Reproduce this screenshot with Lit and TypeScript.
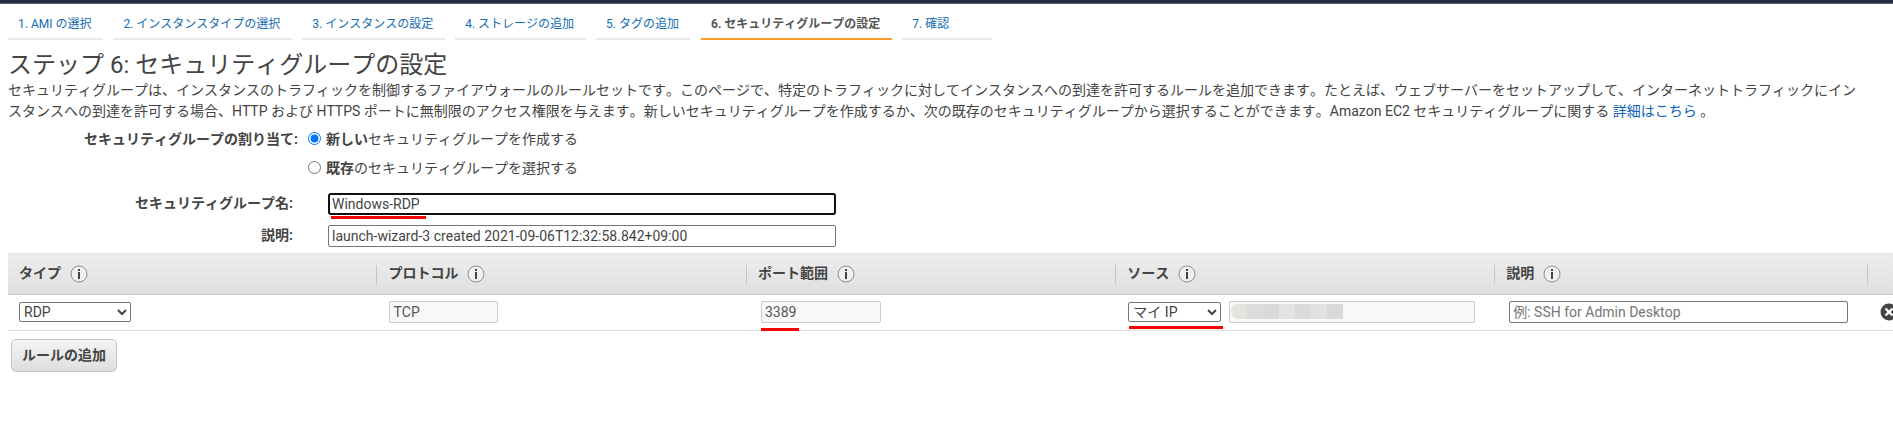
import { LitElement, html, css, svg } from "lit";
import { customElement, property, query } from "lit/decorators.js";

const STEPS = [
  "1. AMI の選択",
  "2. インスタンスタイプの選択",
  "3. インスタンスの設定",
  "4. ストレージの追加",
  "5. タグの追加",
  "6. セキュリティグループの設定",
  "7. 確認",
];
const CURRENT_STEP = 5;

const COLUMNS = ["タイプ", "プロトコル", "ポート範囲", "ソース", "説明"];

@customElement("info-icon")
export class InfoIcon extends LitElement {
  static styles = css`
    :host { display: inline-flex; }
    .icon { display: block; }
  `;
  render() {
    return html`<svg class="icon" width="18" height="18" viewBox="0 0 18 18" aria-hidden="true">
      <circle cx="9" cy="9" r="8" fill="#f0f0f0" stroke="#8c8c8c" stroke-width="1"></circle>
      <rect x="8" y="4" width="2" height="2" fill="#444"></rect>
      <rect x="8" y="7" width="2" height="7" fill="#444"></rect>
    </svg>`;
  }
}

@customElement("wizard-steps")
export class WizardSteps extends LitElement {
  @property({ type: Number }) current = 0;

  static styles = css`
    :host { display: block; }
    .steps {
      display: flex;
      gap: 10px;
      padding: 0 8px;
      font-size: 12px;
      line-height: 16px;
      white-space: nowrap;
    }
    .step {
      box-sizing: border-box;
      min-width: 90px;
      padding: 12px 12px 6px 10px;
      border-bottom: 2px solid #eaeaea;
      color: #146eb4;
      text-decoration: none;
    }
    .current {
      border-bottom-color: #ff9a29;
      color: #555;
      font-weight: bold;
    }
  `;
  render() {
    return html`<nav class="steps">
      ${STEPS.map(
        (s, i) => html`<a class="step ${i === this.current ? "current" : ""}" href="#step-${i + 1}">${s}</a>`
      )}
    </nav>`;
  }
}

@customElement("app-root")
export class AppRoot extends LitElement {
  @query("#group-name") private groupName!: HTMLInputElement;

  static styles = css`
    :host {
      display: block;
      overflow: hidden;
      background: #fff;
      color: #444;
      font-family: Roboto, "Noto Sans CJK JP", sans-serif;
      font-size: 14px;
      line-height: 21px;
      font-kerning: none;
    }
    .topbar {
      height: 3px;
      background: #232f3e;
      border-bottom: 1px solid #5b6470;
    }
    .title {
      margin: 11px 8px 0;
      font-size: 24px;
      font-weight: normal;
      line-height: 29px;
    }
    .intro { margin: 0 0 0 8px; word-break: break-all; }
    .link { color: #0f62bd; text-decoration: none; }

    .assign {
      display: grid;
      grid-template-columns: 290px 1fr;
      column-gap: 6px;
      margin: 7px 0 0 8px;
    }
    .assign-label { font-weight: bold; text-align: right; }
    .choices { display: flex; flex-direction: column; gap: 8px; }
    .choice { display: flex; align-items: flex-start; }
    .radio { width: 13px; height: 13px; margin: 3px 5px 0 4px; }

    .fields {
      display: grid;
      grid-template-columns: 285px minmax(0, 508px);
      column-gap: 35px;
      row-gap: 10px;
      margin: 14px 8px 6px;
    }
    .field-label { font-weight: bold; text-align: right; line-height: 20px; }
    .anchor { position: relative; display: flex; }
    .text {
      box-sizing: border-box;
      width: 100%;
      height: 22px;
      padding: 0 3px;
      border: 1px solid #767676;
      border-radius: 2px;
      background: #fff;
      color: #444;
      font: inherit;
      font-kerning: none;
      line-height: 20px;
      outline: none;
    }
    .text::placeholder { color: #757575; }
    .active { padding: 0 2px; border: 2px solid #101010; border-radius: 3px; }
    .text:disabled { border-color: #ccc; background: #f8f8f8; color: #555; }

    .mark {
      position: absolute;
      left: 0;
      height: 3px;
      background: #f00;
      pointer-events: none;
    }
    .mark-name { left: 3px; top: 23px; width: 95px; }
    .mark-port { top: 27px; width: 38px; }
    .mark-source { left: 1px; top: 24px; width: 94px; }

    .rules-wrap { margin-left: 8px; }
    .rules {
      width: 100%;
      table-layout: fixed;
      border-collapse: separate;
      border-spacing: 0;
    }
    .w-std { width: 19.6%; }
    .w-source { width: 20.1%; }
    .w-desc { width: 19.8%; }
    .head {
      height: 40px;
      padding: 0;
      border-top: 1px solid #e2e2e2;
      border-bottom: 1px solid #c8c8c8;
      background: linear-gradient(#eee, #dfdfdf);
      text-align: left;
    }
    .head-in {
      display: flex;
      align-items: center;
      gap: 9px;
      height: 19px;
      padding-left: 11px;
      border-right: 1px solid #c4c4c4;
      box-shadow: 1px 0 0 #fafafa;
      line-height: 20px;
    }
    .head-text { padding-bottom: 2px; }
    .cell { height: 33px; padding: 0 0 2px 12px; border-bottom: 1px solid #ddd; }
    .inset { padding-left: 14px; }
    .pair { display: flex; align-items: center; gap: 8px; padding-right: 20px; }
    .select {
      box-sizing: border-box;
      height: 20px;
      padding: 0;
      border: 1px solid #767676;
      border-radius: 2px;
      background: #fff;
      color: #444;
      font: inherit;
      font-kerning: none;
      line-height: 18px;
    }
    .type-cell { padding-left: 11px; }
    .type { display: block; width: 112px; }
    .source { width: 93px; }
    .protocol { width: 109px; }
    .port { width: 120px; }
    .grow { position: relative; flex: 1; display: flex; }
    .mosaic { position: absolute; left: 2px; top: 3px; display: block; }
    .delete {
      display: block;
      width: 18px;
      height: 18px;
      padding: 0;
      border: 0;
      background: none;
    }
    .add {
      height: 33px;
      margin: 8px 0 0 11px;
      padding: 0 10px;
      border: 1px solid #c4c4c4;
      border-radius: 5px;
      background: linear-gradient(#f4f4f4, #dedede);
      color: #444;
      font: inherit;
      font-kerning: none;
      font-weight: bold;
    }
  `;

  firstUpdated() {
    const end = this.groupName.value.length;
    this.groupName.focus();
    this.groupName.setSelectionRange(end, end);
  }

  private mosaic() {
    const tones = ["#e4e3de", "#dcdcdc", "#d7dad9", "#e3e3e3", "#dbdbdb", "#e1e1e1", "#d9d9d8"];
    return html`<svg class="mosaic" width="112" height="15" viewBox="0 0 112 15" aria-hidden="true">
      ${tones.map((t, i) =>
        i === 0
          ? svg`<path d="M16 0H7a7 7.5 0 0 0 0 15H16Z" fill=${t}></path>`
          : svg`<rect x=${i * 16} y="0" width="16" height="15" fill=${t}></rect>`
      )}
    </svg>`;
  }

  render() {
    return html`
      <div class="topbar"></div>
      <wizard-steps .current=${CURRENT_STEP}></wizard-steps>
      <h1 class="title">ステップ 6: セキュリティグループの設定</h1>
      <p class="intro">セキュリティグループは、インスタンスのトラフィックを制御するファイアウォールのルールセットです。このページで、特定のトラフィックに対してインスタンスへの到達を許可するルールを追加できます。たとえば、ウェブサーバーをセットアップして、インターネットトラフィックにイン<br />スタンスへの到達を許可する場合、HTTP および HTTPS ポートに無制限のアクセス権限を与えます。新しいセキュリティグループを作成するか、次の既存のセキュリティグループから選択することができます。Amazon EC2 セキュリティグループに関する <a class="link" href="#more">詳細はこちら</a> 。</p>

      <div class="assign" role="radiogroup" aria-labelledby="assign-label">
        <div class="assign-label" id="assign-label">セキュリティグループの割り当て:</div>
        <div class="choices">
          <label class="choice"><input class="radio" type="radio" name="assign" checked /><span><b>新しい</b>セキュリティグループを作成する</span></label>
          <label class="choice"><input class="radio" type="radio" name="assign" /><span><b>既存</b>のセキュリティグループを選択する</span></label>
        </div>
      </div>

      <div class="fields">
        <label class="field-label" for="group-name">セキュリティグループ名:</label>
        <div class="anchor">
          <input class="text active" id="group-name" type="text" value="Windows-RDP" />
          <span class="mark mark-name"></span>
        </div>
        <label class="field-label" for="group-desc">説明:</label>
        <div class="anchor">
          <input class="text" id="group-desc" type="text" value="launch-wizard-3 created 2021-09-06T12:32:58.842+09:00" />
        </div>
      </div>

      <div class="rules-wrap">
        <table class="rules">
          <colgroup>
            <col class="w-std" /><col class="w-std" /><col class="w-std" />
            <col class="w-source" /><col class="w-desc" /><col />
          </colgroup>
          <thead>
            <tr>
              ${COLUMNS.map(
                (c) => html`<th class="head" scope="col"><div class="head-in"><span class="head-text">${c}</span><info-icon></info-icon></div></th>`
              )}
              <th class="head"></th>
            </tr>
          </thead>
          <tbody>
            <tr>
              <td class="cell type-cell">
                <select class="select type" aria-label="タイプ"><option>RDP</option></select>
              </td>
              <td class="cell">
                <div class="anchor"><input class="text protocol" aria-label="プロトコル" value="TCP" disabled /></div>
              </td>
              <td class="cell inset">
                <div class="anchor">
                  <input class="text port" aria-label="ポート範囲" value="3389" disabled />
                  <span class="mark mark-port"></span>
                </div>
              </td>
              <td class="cell">
                <div class="pair">
                  <div class="anchor">
                    <select class="select source" aria-label="ソース"><option>マイ IP</option></select>
                    <span class="mark mark-source"></span>
                  </div>
                  <div class="grow">
                    <input class="text" aria-label="ソース IP" disabled />
                    ${this.mosaic()}
                  </div>
                </div>
              </td>
              <td class="cell inset">
                <div class="pair">
                  <input class="text" aria-label="説明" placeholder="例: SSH for Admin Desktop" />
                </div>
              </td>
              <td class="cell">
                <button class="delete" aria-label="削除">
                  <svg width="18" height="18" viewBox="0 0 18 18" aria-hidden="true">
                    <circle cx="9" cy="9" r="8.5" fill="#444"></circle>
                    <path d="M5.5 5.5L12.5 12.5M12.5 5.5L5.5 12.5" stroke="#fff" stroke-width="2.4"></path>
                  </svg>
                </button>
              </td>
            </tr>
          </tbody>
        </table>
      </div>
      <button class="add">ルールの追加</button>
    `;
  }
}
